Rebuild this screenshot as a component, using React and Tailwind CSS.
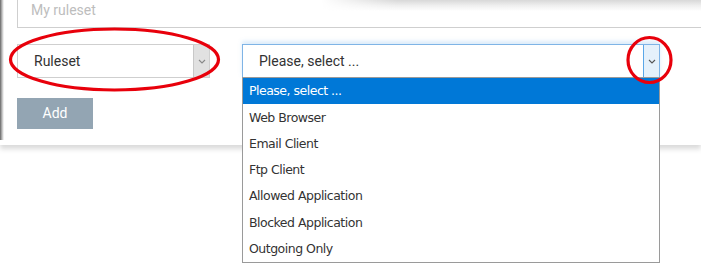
import React from "react";

const items = [
  "Please, select ...",
  "Web Browser",
  "Email Client",
  "Ftp Client",
  "Allowed Application",
  "Blocked Application",
  "Outgoing Only",
];

function Chevron({ color = "#777" }) {
  return (
    <svg width="8" height="5" viewBox="0 0 8 5">
      <polyline points="1,1 4,4 7,1" fill="none" stroke={color} strokeWidth="1.1" />
    </svg>
  );
}

export default function App() {
  return (
    <div className="relative w-[701px] h-[264px] bg-white overflow-hidden" style={{ fontFamily: "Roboto, sans-serif" }}>
      {/* paper */}
      <div className="relative h-[145px] w-full bg-white pl-[17px] shadow-[0_4px_5px_rgba(0,0,0,0.15)]">
        <div className="absolute left-0 top-0 h-[140px] w-[4px] bg-gradient-to-r from-[#666] via-[#bbb] to-transparent" />
        <div className="absolute right-0 top-0 h-[11px] w-[380px] bg-gradient-to-b from-[#d8d8d8] via-[#efefef] to-transparent [mask-image:linear-gradient(to_right,transparent,black_20%)]" />
        {/* top input */}
        <div className="h-[28px] border-l border-b border-[#cfcfcf] pl-[13px] pt-[2px] text-[14px] leading-[17px] text-[#bdbdbd]">
          My ruleset
        </div>
        {/* selects row */}
        <div className="mt-[16px] flex items-start gap-[32px]">
          <div className="flex h-[34px] w-[193px] border border-[#cfcfcf] bg-white">
            <div className="flex flex-1 items-center pl-[16px] text-[14px] text-[#333]">Ruleset</div>
            <div className="flex w-[16px] items-center justify-center border-l border-[#c8c8c8] bg-[#e1e1e1]">
              <Chevron color="#888" />
            </div>
          </div>
          <div className="flex h-[34px] w-[418px] border border-[#7fb4e6] bg-white shadow-[0_-3px_4px_rgba(120,180,235,0.25)]">
            <div className="flex flex-1 items-center pl-[16px] text-[14px] text-[#333]">Please, select ...</div>
            <div className="flex w-[16px] items-center justify-center border-l border-[#5aa7e8] bg-[#e5f1fb]">
              <Chevron color="#555" />
            </div>
          </div>
        </div>
        <button className="mt-[20px] flex h-[31px] w-[76px] items-center justify-center bg-[#93a5b3] text-[14px] text-white">
          Add
        </button>
      </div>

      {/* dropdown list */}
      <div
        className="absolute left-[242px] top-[77px] w-[418px] border border-[#9a9a9a] bg-white text-[12.5px] text-[#333]"
        style={{ fontFamily: "'DejaVu Sans', sans-serif" }}
      >
        {items.map((t, i) => (
          <div
            key={t}
            className={
              "flex h-[26.3px] items-center pl-[6px] pt-[1px] tracking-[-0.5px] " +
              (i === 0 ? "bg-[#0078d7] text-white" : "")
            }
          >
            {t}
          </div>
        ))}
      </div>

      {/* annotations */}
      <svg className="pointer-events-none absolute left-0 top-0" width="701" height="264">
        <ellipse cx="114.5" cy="59.5" rx="104" ry="30.5" fill="none" stroke="#e8000b" strokeWidth="3.2" />
        <ellipse cx="649.5" cy="60" rx="21.5" ry="22.5" fill="none" stroke="#e8000b" strokeWidth="3.2" />
      </svg>
    </div>
  );
}
